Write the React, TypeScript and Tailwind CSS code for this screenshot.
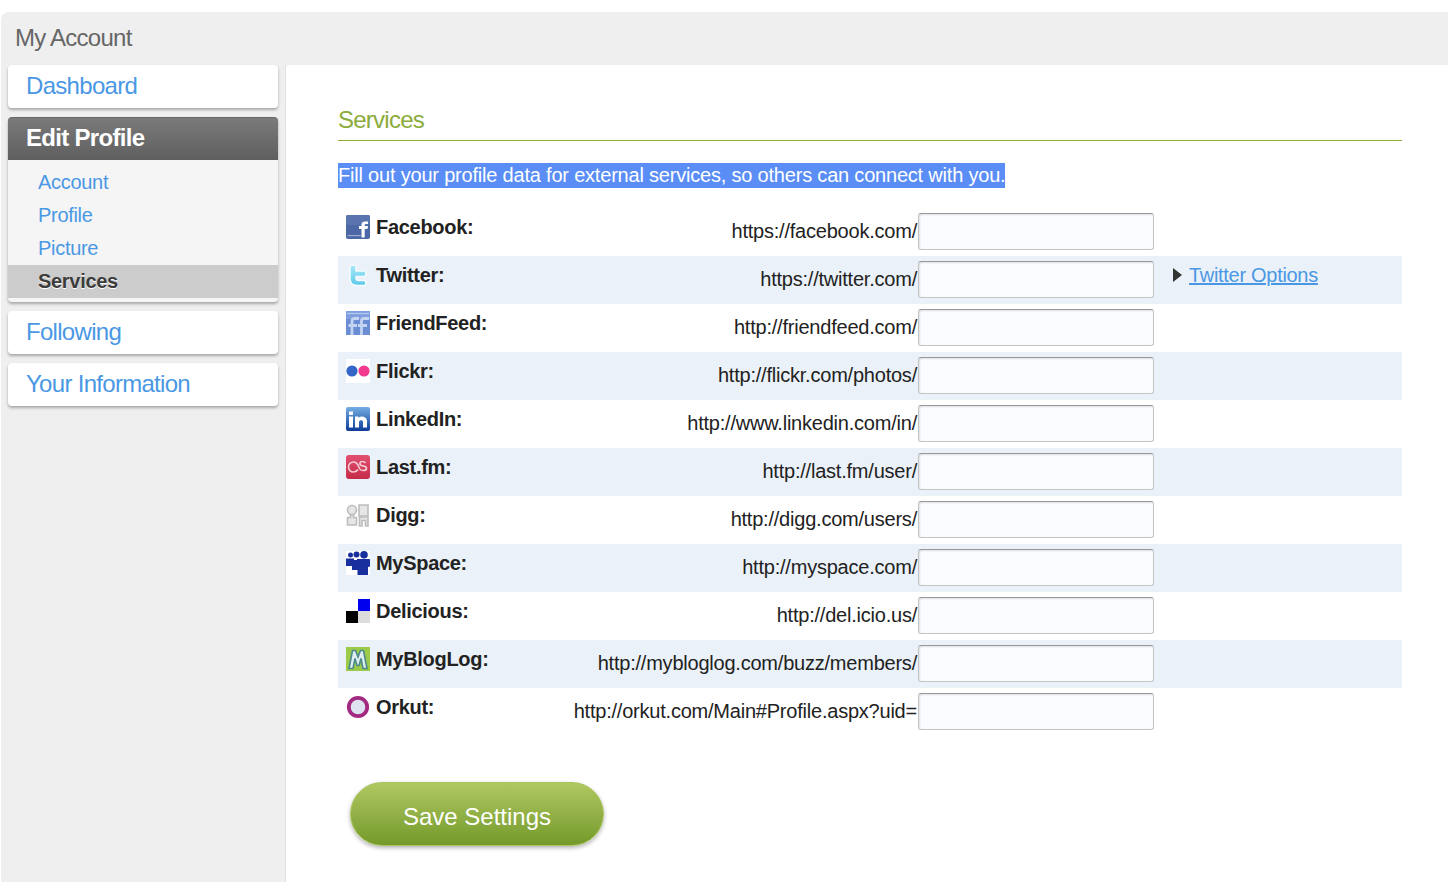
import React from "react";

const Facebook = () => (
  <svg width="24" height="24" viewBox="0 0 24 24">
    <rect x="0" y="0" width="24" height="24" rx="2" fill="#4d68a6" />
    <rect x="0" y="0" width="24" height="10" rx="2" fill="#5a74af" />
    <rect x="1.500" y="20" width="13" height="1.200" fill="#9aaace" />
    <path d="M15.500 22.500V14H13v-3h2.500V9.500C15.500 7.500 17 6.500 19 6.500h3V9h-2c-1 0-1.300.5-1.300 1.200V11H22l-.5 3h-2.800v8.500z" fill="#fff" />
  </svg>
);
const Twitter = () => (
  <svg width="24" height="24" viewBox="0 0 24 24">
    <defs>
      <linearGradient id="tw" x1="0" y1="0" x2="0" y2="1">
        <stop offset="0" stopColor="#a9e8f7" />
        <stop offset="1" stopColor="#5cc9ea" />
      </linearGradient>
    </defs>
    <path d="M4 3.500C4 1.500 10 1.500 10 3.500V8h8c2.500 0 2.500 5.500 0 5.500h-8v1.500c0 1.500.8 2.500 2.500 2.500H18c2.500 0 2.500 5 0 5h-7c-4.500 0-7-2.500-7-7z" fill="url(#tw)" stroke="#f2fcfe" strokeWidth="1.500" />
  </svg>
);
const FriendFeed = () => (
  <svg width="24" height="24" viewBox="0 0 24 24">
    <rect width="24" height="24" fill="#6b8dd4" />
    <rect width="24" height="8" fill="#7f9fdf" />
    <path d="M1 2.500h22" stroke="#b7caef" strokeWidth="1.200" />
    <path d="M6 24V10c0-1.500 1-2.500 2.500-2.500H13M2.500 14.500H11M15.500 24V10c0-1.500 1-2.500 2.500-2.500h5M12 14.500h9" stroke="#c3d3f2" strokeWidth="2.800" fill="none" />
  </svg>
);
const Flickr = () => (
  <svg width="24" height="24" viewBox="0 0 24 24">
    <rect width="24" height="24" fill="#fff" />
    <circle cx="6" cy="12" r="5.600" fill="#3366c8" />
    <circle cx="18" cy="12" r="5.600" fill="#f23a8e" />
  </svg>
);
const LinkedIn = () => (
  <svg width="24" height="24" viewBox="0 0 24 24">
    <defs>
      <linearGradient id="li" x1="0" y1="0" x2="0" y2="1">
        <stop offset="0" stopColor="#74aee3" />
        <stop offset="1" stopColor="#0d3c98" />
      </linearGradient>
    </defs>
    <rect width="24" height="24" rx="2" fill="url(#li)" />
    <rect x="3" y="9.500" width="4" height="11" fill="#fff" />
    <rect x="3" y="4.500" width="4" height="3.500" fill="#fff" />
    <path d="M9 9.500h3.500V11c1.200-2 7.500-2.500 8.500 2.500v7h-4V15c0-2.500-4-2.500-4 0v5.500H9z" fill="#fff" />
  </svg>
);
const LastFm = () => (
  <svg width="24" height="24" viewBox="0 0 24 24">
    <defs>
      <linearGradient id="lf" x1="0" y1="0" x2="0" y2="1">
        <stop offset="0" stopColor="#e2506f" />
        <stop offset="1" stopColor="#c52c4a" />
      </linearGradient>
    </defs>
    <rect width="24" height="24" rx="3" fill="url(#lf)" />
    <path d="M12 14.500C11 16 9.500 17 7.500 17a5 5 0 0 1 0-10c2 0 3.500 1 4.500 3l1.500 3.500c.7 1.500 2 2 3.500 2 1.700 0 3.500-.5 3.500-2s-1-2-2.800-2.300c-2-.4-3.800-.7-3.800-2.500 0-1.200 1-2.200 2.600-2.200 1.300 0 2.500.5 3 1.500" fill="none" stroke="#f5c8d2" strokeWidth="1.700" />
  </svg>
);
const Digg = () => (
  <svg width="24" height="24" viewBox="0 0 24 24" fill="#e6e6e6" stroke="#bdbdbd" strokeWidth="1.600">
    <path d="M13 2h9v11h-9z" />
    <path d="M13.500 14h8.500v9h-2.500v-5.500h-3.500v5.500h-2.500z" />
    <circle cx="6" cy="7" r="4.500" />
    <path d="M4.500 12h3v2.500h3V22H1.500v-7.500h3z" />
  </svg>
);
const MySpace = () => (
  <svg width="24" height="24" viewBox="0 0 24 24">
    <rect width="24" height="24" fill="#fff" />
    <g fill="#1a2f9e">
      <circle cx="18" cy="3.800" r="3.800" />
      <circle cx="10.500" cy="3.500" r="3" />
      <circle cx="4.500" cy="4" r="2.500" />
      <path d="M0 7.500h8v1.500h3V8h12c.7 0 1 .4 1 1v6.500l-2 .5V24H11.500v-5H6v-4H0z" />
    </g>
  </svg>
);
const Delicious = () => (
  <svg width="24" height="24" viewBox="0 0 24 24">
    <rect x="12" y="0" width="12" height="12" fill="#0000ee" />
    <rect x="0" y="12" width="12" height="12" fill="#000" />
    <rect x="12" y="12" width="12" height="12" fill="#dcdcdc" />
  </svg>
);
const MyBlogLog = () => (
  <svg width="24" height="24" viewBox="0 0 24 24">
    <rect width="24" height="24" fill="#9ccb4a" />
    <path d="M3 21.500L6.500 3.500h3L12 10l2.500-6.500h3L21 21.500h-4l-2-10-2 7h-2l-2-7-2 10z" fill="#dfeff0" stroke="#4d8a8c" strokeWidth="1.600" />
  </svg>
);
const Orkut = () => (
  <svg width="24" height="24" viewBox="0 0 24 24">
    <circle cx="12" cy="12" r="9.200" fill="#dde2ee" stroke="#a22a80" strokeWidth="3.800" />
  </svg>
);

const rows: [React.ReactNode, string, string, number][] = [
  [<Facebook />, "Facebook:", "https://facebook.com/", 0],
  [<Twitter />, "Twitter:", "https://twitter.com/", 1],
  [<FriendFeed />, "FriendFeed:", "http://friendfeed.com/", 0],
  [<Flickr />, "Flickr:", "http://flickr.com/photos/", 0],
  [<LinkedIn />, "LinkedIn:", "http://www.linkedin.com/in/", 0],
  [<LastFm />, "Last.fm:", "http://last.fm/user/", 0],
  [<Digg />, "Digg:", "http://digg.com/users/", 0],
  [<MySpace />, "MySpace:", "http://myspace.com/", 0],
  [<Delicious />, "Delicious:", "http://del.icio.us/", 0],
  [<MyBlogLog />, "MyBlogLog:", "http://mybloglog.com/buzz/members/", 0],
  [<Orkut />, "Orkut:", "http://orkut.com/Main#Profile.aspx?uid=", 0],
];

const card = "rounded bg-white shadow-[0_2px_3px_rgba(0,0,0,0.3)]";

function NavCard({ label }: { label: string }) {
  return (
    <div className={`${card} h-[43px] pl-[18px] pb-[2px] flex items-center`}>
      <a className="text-[24px] tracking-[-0.7px] text-[#4a98e4]">{label}</a>
    </div>
  );
}

function SubItem({ label, active }: { label: string; active?: boolean }) {
  return (
    <div className={`h-[33px] pl-[30px] pb-[2px] flex items-center text-[20px] tracking-[-0.3px] ${active ? "bg-[#cccccc] font-bold text-[#3c3c3c] [text-shadow:0_1px_0_#fff]" : "text-[#4a98e4]"}`}>
      {label}
    </div>
  );
}

export default function App() {
  return (
    <div className="bg-white pt-3 pl-px h-[882px] overflow-hidden font-['Liberation_Sans',Arial,sans-serif]">
      <div className="h-[870px] bg-[#efefef] rounded-tl-lg flex flex-col">
        <div className="h-[53px] shrink-0 pl-[14px] pt-[11px] text-[24px] leading-[30px] tracking-[-0.75px] text-[#666666]">My Account</div>
        <div className="flex flex-1 min-h-0">
          <aside className="w-[285px] shrink-0 pl-[7px] pr-[7px] flex flex-col gap-[9px] border-r border-r-[#e2e2e2]">
            <NavCard label="Dashboard" />
            <div className="rounded bg-[#f5f5f5] shadow-[0_2px_3px_rgba(0,0,0,0.3)] pb-1">
              <div className="h-[43px] pl-[18px] pb-[2px] flex items-center rounded-t bg-gradient-to-b from-[#7a7a7a] to-[#5f5f5f] text-white font-bold text-[24px] tracking-[-0.7px] border-t border-[#6a6a6a]">Edit Profile</div>
              <div className="pt-[6px]">
                <SubItem label="Account" />
                <SubItem label="Profile" />
                <SubItem label="Picture" />
                <SubItem label="Services" active />
              </div>
            </div>
            <NavCard label="Following" />
            <NavCard label="Your Information" />
          </aside>
          <main className="flex-1 bg-white rounded-tl pl-[52px] pr-[46px] pt-10 min-w-0">
            <h2 className="text-[24px] leading-[30px] tracking-[-0.75px] text-[#8bab3b] h-9 border-b border-b-[#8fb030]">Services</h2>
            <div className="mt-[22px] h-[25px] text-[20px] leading-[25px] tracking-[-0.2px]">
              <span className="inline-block bg-[#5a8df5] text-white">Fill out your profile data for external services, so others can connect with you.</span>
            </div>
            <div className="mt-5 flex flex-col">
              {rows.map(([icon, name, url, opts], i) => (
                <div key={name} className={`h-12 flex pl-2 pt-[5px] ${i % 2 === 1 ? "bg-[#eaf1f8]" : "bg-white"}`}>
                  <div className="w-6 h-6 mt-[2px] shrink-0">{icon}</div>
                  <div className="w-[150px] pl-[6px] shrink-0 text-[20px] leading-7 font-bold tracking-[-0.3px] text-[#222222]">{name}</div>
                  <div className="w-[397px] shrink-0 text-right text-[20px] leading-[36px] tracking-[-0.22px] text-[#222222] whitespace-nowrap">{url}</div>
                  <input className="ml-px w-[236px] h-[37px] shrink-0 rounded-[3px] bg-[#fafcff] border border-[#c4c4c4] border-t-[#999999] shadow-[inset_1px_1px_2px_rgba(0,0,0,0.12)]" />
                  {opts ? (
                    <div className="ml-[19px] flex items-center h-7 gap-[7px] text-[20px] tracking-[-0.3px]">
                      <svg width="9" height="14" viewBox="0 0 9 14"><path d="M0 0l9 7-9 7z" fill="#333" /></svg>
                      <a className="underline text-[#4a98e4]">Twitter Options</a>
                    </div>
                  ) : null}
                </div>
              ))}
            </div>
            <button className="mt-[46px] ml-3 w-[254px] h-16 pt-[6px] rounded-[32px] bg-gradient-to-b from-[#b0c860] to-[#749a2a] border border-[#a9c45d] text-white text-[24px] shadow-[0_2px_4px_rgba(0,0,0,0.3)]">Save Settings</button>
          </main>
        </div>
      </div>
    </div>
  );
}
